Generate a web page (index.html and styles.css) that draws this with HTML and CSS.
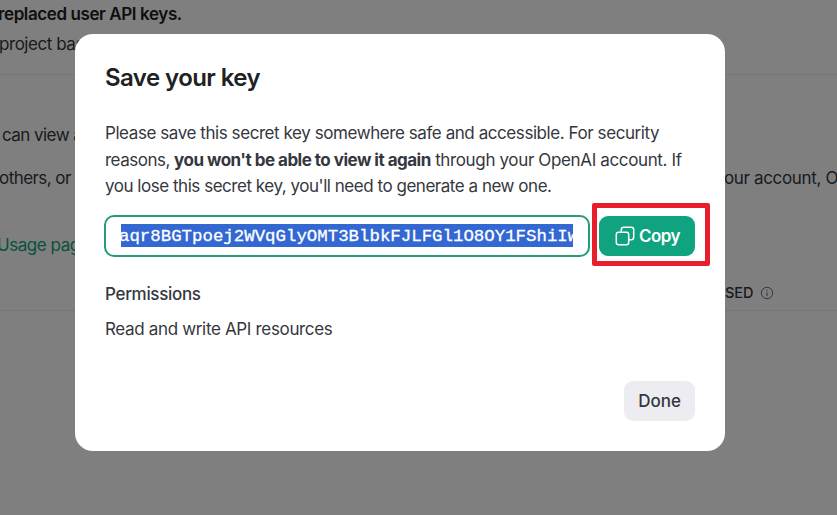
FILE: index.html
```
<!DOCTYPE html>
<html lang="en">
<head>
<meta charset="utf-8">
<title>API keys</title>
<link rel="stylesheet" href="styles.css">
</head>
<body>
<main class="page">
  <div class="notice">
    <p class="row strong"><span class="replaced">replaced user API keys.</span></p>
    <p class="row"><span class="project">project based</span></p>
  </div>
  <p class="row view"><span>can view a</span></p>
  <p class="row share"><span class="others">others, or e</span><span class="account">our account, O</span></p>
  <p class="row usage"><a class="link">Usage page</a></p>
  <div class="thead"><span>SED</span>
    <svg class="info" viewBox="0 0 14 14" fill="none" stroke="currentColor"><circle cx="7" cy="7" r="5.7"/><path d="M7 6.2v4M7 3.8v1.1"/></svg>
  </div>
</main>
<div class="overlay">
  <section class="modal">
    <h1><span>Save your key</span></h1>
    <div class="copytext">
      <p class="l1"><span>Please save this secret key somewhere safe and accessible. For security</span></p>
      <p class="l2"><span>reasons, </span><b>you won't be able to view it again</b><span class="tail"> through your OpenAI account. If</span></p>
      <p class="l3"><span>you lose this secret key, you'll need to generate a new one.</span></p>
    </div>
    <div class="keyrow">
      <div class="field"><div class="selected"><span>aqr8BGTpoej2WVqGlyOMT3BlbkFJLFGl1O8OY1FShiIw</span></div></div>
      <div class="highlight">
        <button class="copy">
          <svg viewBox="0 0 20 20" fill="none" stroke="currentColor" stroke-width="1.5"><rect x="1.3" y="6.3" width="12.4" height="12.4" rx="2.2"/><path d="M6.3 6.3V3.7a2.4 2.4 0 0 1 2.4-2.4h7.6a2.4 2.4 0 0 1 2.4 2.4v7.6a2.4 2.4 0 0 1-2.4 2.4h-2.6"/></svg>
          <span>Copy</span>
        </button>
      </div>
    </div>
    <h2><span>Permissions</span></h2>
    <p class="perm"><span>Read and write API resources</span></p>
    <div class="actions"><button class="done"><span>Done</span></button></div>
  </section>
</div>
</body>
</html>
```
FILE: styles.css
```
* { box-sizing: border-box; }
body { margin: 0; width: 837px; height: 515px; overflow: hidden; background: #fff; color: #353740; font: 17px/26px Inter, "Liberation Sans", sans-serif; }
p, h1, h2 { margin: 0; white-space: pre; }
button { border: 0; padding: 0; font: inherit; }
.page { height: 515px; overflow: hidden; letter-spacing: -0.45px; }
.notice { height: 75px; padding-top: 1px; border-bottom: 1px solid #ececf1; }
.notice .row { height: 30px; }
.strong { font-weight: 600; color: #202123; letter-spacing: -0.4px; }
.replaced { margin-left: -2px; }
.project { margin-left: -1px; }
.view { margin-top: 47px; padding-left: 2px; letter-spacing: -0.55px; }
.share { display: flex; margin-top: 17px; }
.others { flex: none; width: 725px; margin-left: -1px; letter-spacing: -0.55px; }
.account { flex: none; letter-spacing: -0.35px; }
.usage { margin-top: 41px; }
.link { margin-left: -3px; color: #10a37f; }
.thead { display: flex; align-items: center; gap: 6px; height: 37px; margin-top: 16px; padding: 1px 0 0 725px; border-bottom: 1px solid #ececf1; font-size: 14.5px; font-weight: 500; letter-spacing: 0; }
.info { width: 14px; height: 14px; color: #6e6e80; }
.overlay { position: fixed; inset: 0; padding: 34px 0 0 75px; background: rgba(0, 0, 0, .5); }
.modal { width: 650px; height: 417px; padding: 28px 30px 29px; border-radius: 18px; background: #fff; }
h1 { height: 32px; font-size: 24px; line-height: 32px; font-weight: 600; color: #202123; letter-spacing: -0.57px; }
.copytext { height: 79px; margin-top: 26px; }
.copytext p { height: 26.5px; letter-spacing: -0.43px; }
.copytext .l2 { letter-spacing: -0.5px; }
.copytext .l3 { letter-spacing: -0.47px; }
b { font-weight: 700; letter-spacing: -0.52px; }
.tail { letter-spacing: -0.36px; }
.keyrow { display: flex; height: 64px; margin: 3px -16px 0 -1px; gap: 2px; }
.field { width: 486px; height: 42px; margin-top: 13px; padding: 7px 14px 0 15px; border: 2px solid #259b7c; border-radius: 10px; }
.selected { width: 452px; height: 23px; overflow: hidden; background: #3367d1; color: #fff; font: 17.4px/26px "Liberation Mono", monospace; -webkit-text-stroke: 0.3px #fff; }
.selected span { margin-left: -2px; }
.highlight { width: 118px; height: 63px; margin-top: 1px; padding: 8px 2px; border: 5px solid #e81e2a; border-radius: 2px; }
.copy { display: flex; align-items: center; justify-content: center; gap: 4px; width: 96px; height: 40px; padding-left: 1px; border-radius: 9px; background: #10a37f; color: #fff; font-weight: 600; letter-spacing: -0.5px; }
.copy svg { width: 20px; height: 20px; }
h2 { height: 26px; margin-top: 15px; font-size: 17px; line-height: 26px; font-weight: 500; letter-spacing: -0.32px; }
.perm { margin-top: 9px; letter-spacing: -0.34px; }
.actions { display: flex; justify-content: flex-end; margin-top: 39px; }
.done { width: 71px; height: 40px; border-radius: 9px; background: #ececf1; color: #353740; font-weight: 500; }
```
